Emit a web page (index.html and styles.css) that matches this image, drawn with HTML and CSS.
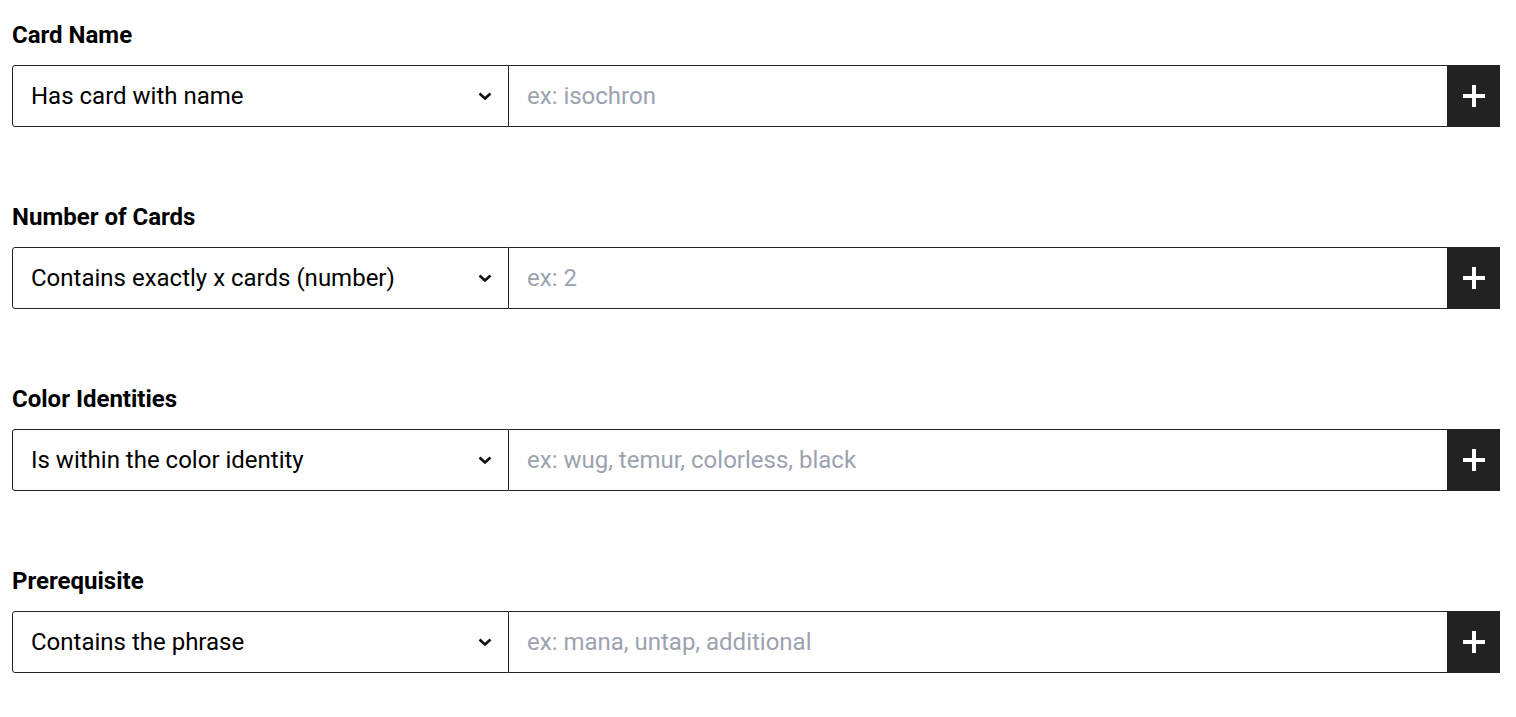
FILE: index.html
```html
<!DOCTYPE html>
<html>
<head>
<meta charset="utf-8">
<link rel="stylesheet" href="styles.css">
</head>
<body>
<div class="form">
  <div class="field">
    <div class="label">Card Name</div>
    <div class="row">
      <div class="select"><span>Has card with name</span><svg class="chev" width="14" height="8" viewBox="0 0 14 8"><path d="M1.5 1.5 L7 6.5 L12.5 1.5" fill="none" stroke="#111" stroke-width="2.6"/></svg></div>
      <input class="input" type="text" placeholder="ex: isochron">
      <div class="btn"><svg width="24" height="24" viewBox="0 0 24 24"><path d="M12 1 V23 M1 12 H23" stroke="#fff" stroke-width="4"/></svg></div>
    </div>
  </div>
  <div class="field">
    <div class="label">Number of Cards</div>
    <div class="row">
      <div class="select"><span>Contains exactly x cards (number)</span><svg class="chev" width="14" height="8" viewBox="0 0 14 8"><path d="M1.5 1.5 L7 6.5 L12.5 1.5" fill="none" stroke="#111" stroke-width="2.6"/></svg></div>
      <input class="input" type="text" placeholder="ex: 2">
      <div class="btn"><svg width="24" height="24" viewBox="0 0 24 24"><path d="M12 1 V23 M1 12 H23" stroke="#fff" stroke-width="4"/></svg></div>
    </div>
  </div>
  <div class="field">
    <div class="label">Color Identities</div>
    <div class="row">
      <div class="select"><span>Is within the color identity</span><svg class="chev" width="14" height="8" viewBox="0 0 14 8"><path d="M1.5 1.5 L7 6.5 L12.5 1.5" fill="none" stroke="#111" stroke-width="2.6"/></svg></div>
      <input class="input" type="text" placeholder="ex: wug, temur, colorless, black">
      <div class="btn"><svg width="24" height="24" viewBox="0 0 24 24"><path d="M12 1 V23 M1 12 H23" stroke="#fff" stroke-width="4"/></svg></div>
    </div>
  </div>
  <div class="field">
    <div class="label">Prerequisite</div>
    <div class="row">
      <div class="select"><span>Contains the phrase</span><svg class="chev" width="14" height="8" viewBox="0 0 14 8"><path d="M1.5 1.5 L7 6.5 L12.5 1.5" fill="none" stroke="#111" stroke-width="2.6"/></svg></div>
      <input class="input" type="text" placeholder="ex: mana, untap, additional">
      <div class="btn"><svg width="24" height="24" viewBox="0 0 24 24"><path d="M12 1 V23 M1 12 H23" stroke="#fff" stroke-width="4"/></svg></div>
    </div>
  </div>
</div>
</body>
</html>
```
FILE: styles.css
```css
* { box-sizing: border-box; }
html, body { margin: 0; padding: 0; background: #fff; }
body { font-family: Roboto, "Noto Sans", sans-serif; color: #000; }
.form { padding: 21px 16px 0 12px; display: flex; flex-direction: column; gap: 76px; }
.field { display: flex; flex-direction: column; gap: 16px; }
.label { font-size: 24px; font-weight: 700; line-height: 28px; color: #000; }
.row { display: flex; height: 62px; }
.select {
  width: 497px; flex: none; display: flex; align-items: center; justify-content: space-between;
  border: 1px solid #222; border-radius: 3px 0 0 3px;
  padding: 0 16px 0 18px; font-size: 24px; color: #000;
}
.chev { display: block; }
.input {
  flex: 1; min-width: 0; height: 62px; border: 1px solid #222; border-left: none; border-right: none;
  padding: 0 18px; font-family: Roboto, "Noto Sans", sans-serif; font-size: 24px; color: #000; outline: none; background: #fff;
}
.input::placeholder { color: #9ca3af; }
.btn { width: 53px; flex: none; background: #222; display: flex; align-items: center; justify-content: center; }
.btn svg { display: block; }
```
